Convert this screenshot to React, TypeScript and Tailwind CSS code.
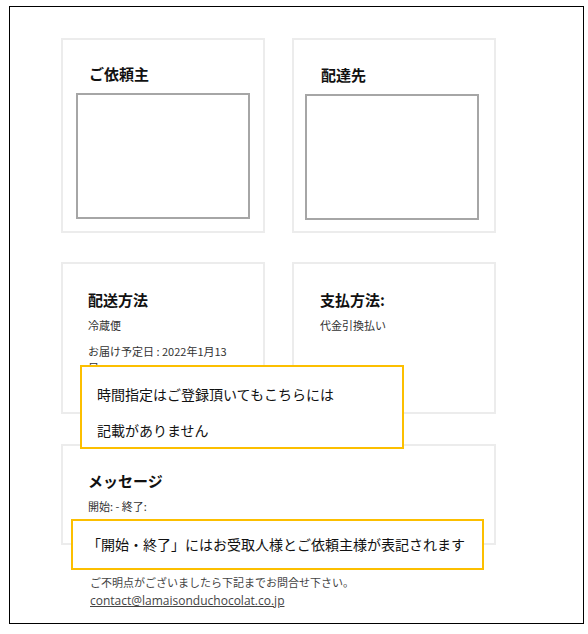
const jp = "font-['Noto_Sans_CJK_JP',sans-serif]"

function Card({ title, children, className = '' }: { title: string; children?: React.ReactNode; className?: string }) {
  return (
    <div className={`border-2 border-[#ececec] bg-white ${className}`}>
      <h2 className="text-[15px] font-bold leading-[20px] text-[#111]">{title}</h2>
      {children}
    </div>
  )
}

function Note({ children, className = '' }: { children: React.ReactNode; className?: string }) {
  return (
    <div className={`absolute whitespace-nowrap border-2 border-[#fcbf00] bg-white text-[14px] text-[#111] ${className}`}>
      {children}
    </div>
  )
}

export default function App() {
  return (
    <div className={`h-[634px] w-[588px] bg-white ${jp}`}>
      <div className="relative ml-[9px] mt-[6px] h-[618px] w-[575px] border border-black pl-[51px] pt-[31px]">
        <div className="grid w-[435px] grid-cols-[204px_204px] gap-x-[27px] gap-y-[29px]">
          <div className="flex h-[195px] flex-col border-2 border-[#ececec] pl-[13px] pt-[24px]">
            <h2 className="pl-[13px] text-[15px] font-bold leading-[20px] text-[#111]">ご依頼主</h2>
            <div className="mt-[9px] h-[126px] w-[174px] border-2 border-[#a6a6a6]" />
          </div>
          <div className="flex h-[195px] flex-col border-2 border-[#ececec] pl-[11px] pt-[25px]">
            <h2 className="pl-[16px] text-[15px] font-bold leading-[20px] text-[#111]">配達先</h2>
            <div className="mt-[9px] h-[126px] w-[174px] border-2 border-[#a6a6a6]" />
          </div>

          <Card title="配送方法" className="h-[152px] px-[25px] pt-[26px]">
            <p className="mt-[7px] text-[11px] leading-[16px] text-[#333]">冷蔵便</p>
            <p className="mt-[10px] text-[11px] leading-[16px] text-[#333]">お届け予定日 : 2022年1月13</p>
            <p className="mt-[2px] text-[11px] leading-[12px] text-[#333]">日</p>
          </Card>
          <Card title="支払方法:" className="h-[152px] px-[26px] pt-[26px]">
            <p className="mt-[7px] text-[11px] leading-[16px] text-[#333]">代金引換払い</p>
          </Card>

          <Card title="メッセージ" className="col-span-2 mt-px h-[101px] px-[25px] pt-[25px]">
            <p className="mt-[7px] text-[11px] leading-[16px] text-[#333]">開始: - 終了:</p>
          </Card>
        </div>

        <div className="mt-[28px] pl-[29px] text-[11px] leading-[18px] text-[#444]">
          <p>ご不明点がございましたら下記までお問合せ下さい。</p>
          <a className="font-['Open_Sans',sans-serif] text-[12px] underline" href="mailto:contact@lamaisonduchocolat.co.jp">
            contact@lamaisonduchocolat.co.jp
          </a>
        </div>

        <Note className="left-[70px] top-[358px] h-[84px] w-[324px] pl-[15px] pt-[9px] leading-[36px]">
          <p>時間指定はご登録頂いてもこちらには</p>
          <p>記載がありません</p>
        </Note>
        <Note className="left-[61px] top-[512px] h-[51px] w-[413px] pl-[14px] pt-[12px] leading-[22px]">
          <p>「開始・終了」にはお受取人様とご依頼主様が表記されます</p>
        </Note>
      </div>
    </div>
  )
}
